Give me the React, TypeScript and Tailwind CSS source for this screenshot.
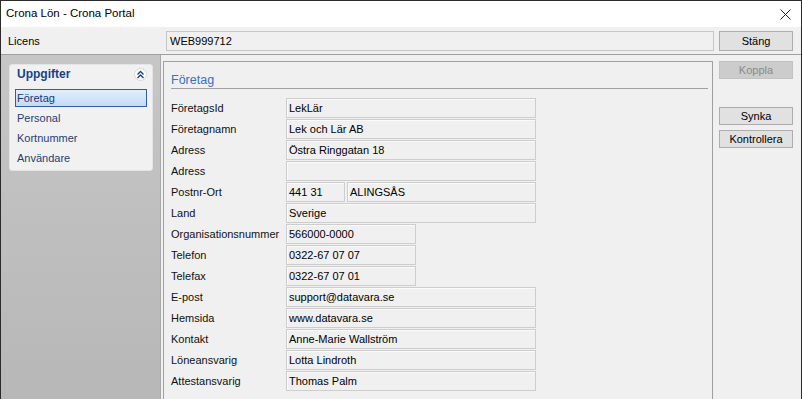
import React from "react";

const rows: { label: string; value?: string; kind: "long" | "short" | "postnr"; city?: string }[] = [
  { label: "FöretagsId", value: "LekLär", kind: "long" },
  { label: "Företagnamn", value: "Lek och Lär AB", kind: "long" },
  { label: "Adress", value: "Östra Ringgatan 18", kind: "long" },
  { label: "Adress", value: "", kind: "long" },
  { label: "Postnr-Ort", value: "441 31", kind: "postnr", city: "ALINGSÅS" },
  { label: "Land", value: "Sverige", kind: "long" },
  { label: "Organisationsnummer", value: "566000-0000", kind: "short" },
  { label: "Telefon", value: "0322-67 07 07", kind: "short" },
  { label: "Telefax", value: "0322-67 07 01", kind: "short" },
  { label: "E-post", value: "support@datavara.se", kind: "long" },
  { label: "Hemsida", value: "www.datavara.se", kind: "long" },
  { label: "Kontakt", value: "Anne-Marie Wallström", kind: "long" },
  { label: "Löneansvarig", value: "Lotta Lindroth", kind: "long" },
  { label: "Attestansvarig", value: "Thomas Palm", kind: "long" },
];

function Field({ w, children }: { w: string; children?: React.ReactNode }) {
  return (
    <div
      className={`${w} h-[20px] border border-[#cdcdcd] bg-[#f0f0f0] shadow-[inset_1px_1px_0_#fafafa] flex items-center pl-[2px] text-[11px] text-black whitespace-nowrap overflow-hidden`}
    >
      {children}
    </div>
  );
}

export default function App() {
  return (
    <div className="w-[802px] h-[399px] flex flex-col border-l border-t border-r border-[#2b2b2b] bg-[#f0f0f0] overflow-hidden font-['Liberation_Sans',Arial,sans-serif] text-black">
      {/* Title bar */}
      <div className="h-[26px] shrink-0 bg-white flex items-center justify-between pl-[5px] pr-[10px]">
        <span className="text-[11.5px] leading-none pb-[1px]">Crona Lön - Crona Portal</span>
        <svg width="11" height="11" viewBox="0 0 11 11" className="mt-[1px]">
          <path d="M0.5 0.5 L10.5 10.5 M10.5 0.5 L0.5 10.5" stroke="#222" strokeWidth="1" fill="none" />
        </svg>
      </div>

      {/* Licens row */}
      <div className="h-[27px] shrink-0 flex items-start pt-[4px] pl-[7px]">
        <div className="w-[158px] h-[20px] flex items-center text-[11px]">Licens</div>
        <div className="w-[548px] h-[20px] border border-[#c6c6c6] bg-[#f0f0f0] flex items-center pl-[3px] text-[11px]">
          WEB999712
        </div>
        <button className="ml-[5px] w-[74px] h-[20px] border border-[#adadad] bg-[#e1e1e1] text-[11px] flex items-center justify-center">
          Stäng
        </button>
      </div>
      <div className="h-[1px] shrink-0 bg-[#a0a0a0]" />

      {/* Body */}
      <div className="flex-1 flex min-h-0">
        {/* Left navigation area */}
        <div className="w-[160px] shrink-0 bg-linear-to-b from-[#c6c6c6] to-[#b7b7b7] pt-[9px] pl-[8px] border-r border-[#a8a8a8]">
          <div className="w-[144px] rounded-[3px] bg-[#f1f1f1] border border-[#e4e4e4] pb-[3px]">
            <div className="h-[24px] flex items-start justify-between pl-[7px] pr-[5px] pt-[2px]">
              <span className="text-[12px] font-bold text-[#15428b] leading-[14px]">Uppgifter</span>
              <div className="mt-[1px] w-[13px] h-[13px] rounded-full bg-white border border-[#d6d6d6] flex items-center justify-center">
                <svg width="9" height="9" viewBox="0 0 9 9">
                  <path d="M1.5 4.5 L4.5 1.5 L7.5 4.5 M1.5 8 L4.5 5 L7.5 8" stroke="#1d3f73" strokeWidth="1.4" fill="none" />
                </svg>
              </div>
            </div>
            <div className="flex flex-col gap-[2px] px-[5px]">
              <div className="h-[18px] border border-[#2f5f98] bg-linear-to-b from-[#e2eefb] to-[#c4dbf5] flex items-center pl-[1px] text-[11px] text-[#123e74]">
                Företag
              </div>
              <div className="h-[18px] flex items-center pl-[2px] text-[11px] text-[#1d3f73]">Personal</div>
              <div className="h-[18px] flex items-center pl-[2px] text-[11px] text-[#1d3f73]">Kortnummer</div>
              <div className="h-[18px] flex items-center pl-[2px] text-[11px] text-[#1d3f73]">Användare</div>
            </div>
          </div>
        </div>

        {/* Main content */}
        <div className="w-[553px] shrink-0 pt-[6px] pl-[2px]">
          <div className="w-[550px] h-full border-l border-t border-r border-[#a0a0a0] pl-[7px] pr-[4px]">
            <div className="h-[27px] pt-[5px] border-b border-[#a0a0a0]">
              <span className="text-[12.5px] leading-[20px] text-[#3b6fc0]">Företag</span>
            </div>
            <div className="mt-[9px] flex flex-col gap-[1px]">
              {rows.map((r, i) => (
                <div key={i} className="flex h-[20px] items-center">
                  <div className="w-[115px] text-[11px] text-[#111]">{r.label}</div>
                  {r.kind === "long" && <Field w="w-[250px]">{r.value}</Field>}
                  {r.kind === "short" && <Field w="w-[130px]">{r.value}</Field>}
                  {r.kind === "postnr" && (
                    <div className="flex gap-[2px]">
                      <Field w="w-[59px]">{r.value}</Field>
                      <Field w="w-[189px]">{r.city}</Field>
                    </div>
                  )}
                </div>
              ))}
            </div>
          </div>
        </div>

        {/* Right buttons */}
        <div className="flex-1 pt-[6px] pl-[5px] flex flex-col">
          <button className="w-[74px] h-[18px] border border-[#c2c2c2] bg-[#cccccc] text-[11px] text-[#8a8a8a] flex items-center justify-center">
            Koppla
          </button>
          <button className="mt-[28px] w-[74px] h-[18px] border border-[#adadad] bg-[#e1e1e1] text-[11px] flex items-center justify-center">
            Synka
          </button>
          <button className="mt-[5px] w-[74px] h-[18px] border border-[#adadad] bg-[#e1e1e1] text-[11px] flex items-center justify-center">
            Kontrollera
          </button>
        </div>
      </div>
    </div>
  );
}
